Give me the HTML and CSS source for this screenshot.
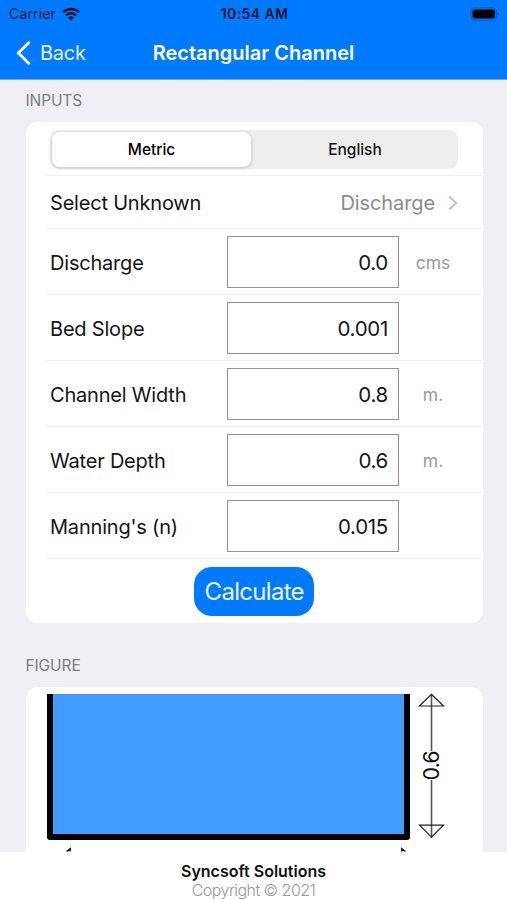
FILE: index.html
```html
<!DOCTYPE html>
<html lang="en">
<head>
<meta charset="utf-8">
<title>Rectangular Channel</title>
<link rel="stylesheet" href="styles.css">
</head>
<body>
<div class="app">
  <header class="header">
    <div class="status">
      <div class="carrier"><span>Carrier</span>
        <svg width="18" height="14" viewBox="0 0 18 14"><g fill="none" stroke="#06152b" stroke-width="2.5"><path d="M1 5.2a11.3 11.3 0 0 1 16 0"/><path d="M4 8.4a7.1 7.1 0 0 1 10 0"/></g><path d="M9 13.6 6.1 10.7a4.1 4.1 0 0 1 5.8 0z" fill="#06152b"/></svg>
      </div>
      <span class="time">10:54 AM</span>
      <svg class="battery" width="30" height="14" viewBox="0 0 30 14"><rect x=".9" y=".9" width="25.4" height="12.2" rx="3.8" fill="none" stroke="#0060c8" stroke-width="1.2"/><rect x="2.5" y="2.6" width="22.3" height="8.8" rx="2" fill="#000"/><path d="M27.6 5v4c1.5-.6 1.5-3.4 0-4z" fill="#004a9c"/></svg>
    </div>
    <nav class="nav">
      <a class="back"><svg width="15" height="24" viewBox="0 0 15 24"><path d="M12.7 1.8 2.3 12l10.4 10.2" fill="none" stroke="#fff" stroke-width="3" stroke-linecap="round" stroke-linejoin="round"/></svg><span>Back</span></a>
      <h1 class="title">Rectangular Channel</h1>
    </nav>
  </header>
  <main class="content">
    <h2 class="section">INPUTS</h2>
    <section class="card inputs">
      <div class="row row-segment"><div class="segment"><span class="option selected">Metric</span><span class="option">English</span></div></div>
      <div class="row row-select"><span class="label">Select Unknown</span><span class="choice">Discharge</span><svg width="10" height="16" viewBox="0 0 10 16"><path d="m1.2 1.5 7 6.5-7 6.5" fill="none" stroke="#c2c2c5" stroke-width="2"/></svg></div>
      <div class="row field"><span class="label">Discharge</span><span class="value">0.0</span><span class="unit">cms</span></div>
      <div class="row field"><span class="label">Bed Slope</span><span class="value">0.001</span></div>
      <div class="row field"><span class="label">Channel Width</span><span class="value">0.8</span><span class="unit">m.</span></div>
      <div class="row field"><span class="label">Water Depth</span><span class="value">0.6</span><span class="unit">m.</span></div>
      <div class="row field"><span class="label">Manning's (n)</span><span class="value">0.015</span></div>
      <div class="action"><span class="button">Calculate</span></div>
    </section>
    <h2 class="section figure-title">FIGURE</h2>
    <section class="card figure">
      <svg class="drawing" width="457" height="166" viewBox="0 0 457 166">
        <path d="M24 7h357v142H24z" fill="#409cff"/>
        <path d="M24 7v143h357V7" fill="none" stroke="#000" stroke-width="6" stroke-linejoin="round"/>
        <g fill="none" stroke="#222" stroke-width="1.2"><path d="M405.5 7v57M405.5 93v58" stroke="#555" stroke-width="1.6"/><path d="M393.5 19 405.5 7.3l12 11.7zM393.5 138.2 405.5 150.2l12-12z"/></g>
        <path d="m40.5 164.5 3.7-2.8v2.8M375.7 164.5v-2.8l3.7 2.8" fill="none" stroke="#111" stroke-width="1.4"/>
        <text class="dimension" transform="translate(413 78.7) rotate(-90)" text-anchor="middle">0.6</text>
      </svg>
    </section>
  </main>
  <footer class="footer"><strong class="company">Syncsoft Solutions</strong><span class="copyright">Copyright © 2021</span></footer>
</div>
</body>
</html>
```

FILE: styles.css
```css
* { box-sizing: border-box; }
body { margin: 0; font-family: Inter, "Liberation Sans", sans-serif; color: #151515; background: #fff; }
.app { width: 507px; height: 900px; display: flex; flex-direction: column; overflow: hidden; }
svg { display: block; flex: none; }
.header { height: 79.5px; flex: none; background: #007aff; border-bottom: 1px solid #66abf8; }
.status { height: 27px; display: grid; grid-template-columns: 1fr auto 1fr; align-items: center; padding: 0 7px 0 9px; color: #06152b; font-size: 14px; }
.carrier { display: flex; align-items: center; gap: 6px; letter-spacing: .15px; }
.time { font-weight: 600; letter-spacing: .4px; }
.battery { justify-self: end; }
.nav { height: 51px; display: grid; grid-template-columns: 1fr auto 1fr; align-items: center; padding: 0 16px; color: #fff; }
.back { display: flex; align-items: center; gap: 9px; font-size: 20px; letter-spacing: -.25px; color: #eaf4ff; }
.title { margin: 0; font-size: 20px; font-weight: 600; letter-spacing: 0; }
.content { flex: 1; min-height: 0; overflow: hidden; background: #f0eff5; padding: 0 24px 0 25.5px; }
.section { margin: 0; height: 42.5px; display: flex; align-items: center; font-size: 15.5px; font-weight: 400; color: #7d7d82; letter-spacing: -.1px; }
.card { background: #fff; border-radius: 12px; overflow: hidden; }
.inputs { padding-top: 1px; }
.row { margin-left: 19px; border-bottom: 1.5px solid #efeff1; display: flex; align-items: center; padding-left: 5.5px; }
.row-segment { height: 53px; padding-right: 25px; }
.segment { flex: 1; height: 39px; border-radius: 9px; background: #eee; display: grid; grid-template-columns: 1fr 1fr; padding: 2px; }
.option { display: flex; align-items: center; justify-content: center; padding-top: 1px; font-size: 15.5px; font-weight: 500; letter-spacing: -.05px; }
.selected { background: #fff; border-radius: 8px; margin-right: 3px; box-shadow: 0 1px 4px #0003; color: #000; }
.row-select { height: 53px; padding: 1px 25px 0 5.5px; }
.label { flex: 0 0 176.5px; font-size: 20px; letter-spacing: -.2px; }
.field .label { padding-top: 1.5px; }
.choice { margin-left: auto; margin-right: 13px; font-size: 20px; letter-spacing: -.1px; color: #8c8c8f; }
.field { height: 66px; padding-top: 1px; }
.value { width: 172.5px; height: 52px; border: 1.5px solid #929292; display: flex; align-items: center; justify-content: flex-end; padding: 1px 10px 0 0; font-size: 20.5px; letter-spacing: -.3px; }
.unit { width: 68px; text-align: center; font-size: 17.5px; color: #9a9a9c; }
.action { height: 64px; display: flex; align-items: center; justify-content: center; }
.button { width: 120px; height: 49px; border-radius: 18px; background: #007aff; color: #eef6ff; font-size: 24px; display: flex; align-items: center; justify-content: center; letter-spacing: -.7px; }
.figure-title { height: 63.5px; padding-top: 21px; }
.figure { height: 200px; }
.dimension { font-size: 21px; fill: #111; letter-spacing: -.7px; }
.footer { height: 48px; flex: none; background: #fff; display: flex; flex-direction: column; align-items: center; padding-top: 9px; }
.company { font-size: 16px; line-height: 20px; font-weight: 600; letter-spacing: 0; color: #111; }
.copyright { font-size: 16px; line-height: 18px; font-weight: 300; letter-spacing: -.55px; color: #98989b; }
```
